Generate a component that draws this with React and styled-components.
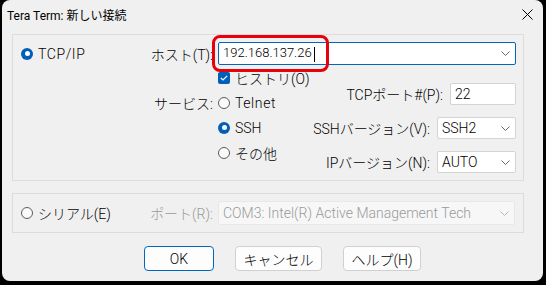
import React from "react"
import styled, { createGlobalStyle } from "styled-components"

const GlobalStyle = createGlobalStyle`
html, body {
    margin:0;
    padding:0;
    background:#000;
}
body {
    width:546px;
    height:285px;
    overflow:hidden;
    font-family:Roboto, "Noto Sans CJK JP", sans-serif;
    font-weight:300;
    color:#000;
}
`

const Window = styled.div`
position:relative;
margin-left:2px;
width:541px;
height:281px;
box-sizing:border-box;
background:#f0f0f0;
border-radius:8px;
overflow:hidden;
`

const TitleBar = styled.div`
height:28px;
display:flex;
align-items:center;
justify-content:space-between;
padding:0 10px 0 5px;
font-size:12px;
font-weight:400;
`

const Content = styled.div`
padding:6px 0 0 10px;
`

const Group = styled.div`
box-sizing:border-box;
width:512px;
height:${p => p.h}px;
margin-top:${p => p.mt || 0}px;
border:1px solid #dcdcdc;
padding:${p => p.pt || 0}px 7px 0 8px;
`

const MainGrid = styled.div`
display:grid;
grid-template-columns:116px 76px 90px 213px;
grid-template-rows:23px repeat(4, 25px);
font-size:14px;
`

const Cell = styled.div`
grid-column:${p => p.col};
grid-row:${p => p.row};
display:flex;
align-items:center;
justify-content:${p => p.right ? "flex-end" : "flex-start"};
padding-left:${p => p.pl || 0}px;
color:${p => p.disabled ? "#9a9a9a" : "#000"};
white-space:nowrap;
`

const Option = styled.label`
display:flex;
align-items:center;
gap:5px;
font-size:14px;
white-space:nowrap;
color:#000;
letter-spacing:${p => p.wide ? "0.6px" : "0"};
`

const RadioDot = styled.span`
position:relative;
box-sizing:border-box;
width:12px;
height:12px;
border-radius:50%;
flex:none;
background:${p => p.checked ? "#005fb8" : "#fafafa"};
border:${p => p.checked ? "none" : "1px solid #5c5c5c"};
&::after{
    content:"";
    display:${p => p.checked ? "block" : "none"};
    position:absolute;
    left:3.5px;
    top:3.5px;
    width:5px;
    height:5px;
    border-radius:50%;
    background:#fff;
}
`

const CheckBox = styled.span`
width:12px;
height:12px;
border-radius:2px;
background:#005fb8;
display:flex;
align-items:center;
justify-content:center;
flex:none;
`

const Field = styled.div`
box-sizing:border-box;
width:${p => p.w ? p.w + "px" : "100%"};
height:${p => p.h || 22}px;
display:flex;
align-items:center;
justify-content:space-between;
padding:0 5px 0 4px;
background:${p => p.disabled ? "#f7f7f7" : "#fff"};
border:1px solid ${p => p.focus ? "#0067c0" : p.disabled ? "#e8e8e8" : "#d3d3d3"};
border-radius:2px;
font-size:${p => p.fs || 14}px;
color:${p => p.disabled ? "#9a9a9a" : "#000"};
white-space:nowrap;
overflow:hidden;
`

const Caret = styled.span`
display:inline-block;
width:1px;
height:15px;
background:#000;
margin-left:2px;
vertical-align:middle;
`

const Settings = styled.div`
grid-column:4;
grid-row:2 / span 4;
padding-top:18px;
display:flex;
flex-direction:column;
gap:12px;
`

const SettingRow = styled.div`
display:flex;
align-items:center;
justify-content:flex-end;
gap:7px;
font-size:14px;
white-space:nowrap;
`

const SerialRow = styled.div`
display:grid;
grid-template-columns:116px 76px 302px;
height:38px;
align-items:center;
font-size:14px;
`

const Buttons = styled.div`
display:flex;
justify-content:center;
gap:21px;
margin-top:13px;
padding-left:10px;
`

const Button = styled.button`
box-sizing:border-box;
width:${p => p.w}px;
height:25px;
background:#fdfdfd;
border:1px solid ${p => p.primary ? "#0067c0" : "#d0d0d0"};
border-radius:4px;
font-family:inherit;
font-weight:inherit;
font-size:14px;
color:#000;
padding:0;
`

const Highlight = styled.div`
position:absolute;
left:210px;
top:35px;
width:117px;
height:37px;
box-sizing:border-box;
border:3px solid #e8000b;
border-radius:8px;
pointer-events:none;
`

function Chevron({ color = "#666" }) {
    return (
        <svg width="9" height="5" viewBox="0 0 9 5">
            <path d="M0.5 0.5 L4.5 4.5 L8.5 0.5" fill="none" stroke={color} strokeWidth="1" />
        </svg>
    )
}

function Radio({ checked, wide, children }) {
    return (
        <Option wide={wide}>
            <RadioDot checked={checked} />
            {children}
        </Option>
    )
}

export default function App() {
    return (
        <>
            <GlobalStyle />
            <Window>
                <TitleBar>
                    <span>Tera Term: 新しい接続</span>
                    <svg width="11" height="11" viewBox="0 0 11 11">
                        <path d="M0.5 0.5 L10.5 10.5 M10.5 0.5 L0.5 10.5" stroke="#000" strokeWidth="1" />
                    </svg>
                </TitleBar>
                <Content>
                    <Group h={147} pt={7}>
                        <MainGrid>
                            <Cell col={1} row={1}>
                                <Radio checked wide>TCP/IP</Radio>
                            </Cell>
                            <Cell col={2} row={1} right>ホスト(T):</Cell>
                            <Cell col="3 / span 2" row={1} pl={5}>
                                <Field focus h={23} fs={13}>
                                    <span>192.168.137.26<Caret /></span>
                                    <Chevron />
                                </Field>
                            </Cell>
                            <Cell col={3} row={2} pl={5}>
                                <Option>
                                    <CheckBox>
                                        <svg width="8" height="6" viewBox="0 0 8 6">
                                            <path d="M0.8 3 L3 5 L7.2 0.8" fill="none" stroke="#fff" strokeWidth="1.2" />
                                        </svg>
                                    </CheckBox>
                                    ヒストリ(O)
                                </Option>
                            </Cell>
                            <Cell col={2} row={3} right>サービス:</Cell>
                            <Cell col={3} row={3} pl={5}>
                                <Radio wide>Telnet</Radio>
                            </Cell>
                            <Cell col={3} row={4} pl={5}>
                                <Radio checked>SSH</Radio>
                            </Cell>
                            <Cell col={3} row={5} pl={5}>
                                <Radio>その他</Radio>
                            </Cell>
                            <Settings>
                                <SettingRow>
                                    TCPポート#(P):
                                    <Field w={66}>22</Field>
                                </SettingRow>
                                <SettingRow>
                                    SSHバージョン(V):
                                    <Field w={79}>SSH2<Chevron /></Field>
                                </SettingRow>
                                <SettingRow>
                                    IPバージョン(N):
                                    <Field w={79}>AUTO<Chevron /></Field>
                                </SettingRow>
                            </Settings>
                        </MainGrid>
                    </Group>
                    <Group h={40} mt={12}>
                        <SerialRow>
                            <Radio>シリアル(E)</Radio>
                            <Cell right disabled>ポート(R):</Cell>
                            <Cell pl={5}>
                                <Field disabled h={24}>
                                    COM3: Intel(R) Active Management Tech
                                    <Chevron color="#b8b8b8" />
                                </Field>
                            </Cell>
                        </SerialRow>
                    </Group>
                    <Buttons>
                        <Button primary w={70}>OK</Button>
                        <Button w={87}>キャンセル</Button>
                        <Button w={78}>ヘルプ(H)</Button>
                    </Buttons>
                </Content>
                <Highlight />
            </Window>
        </>
    )
}
